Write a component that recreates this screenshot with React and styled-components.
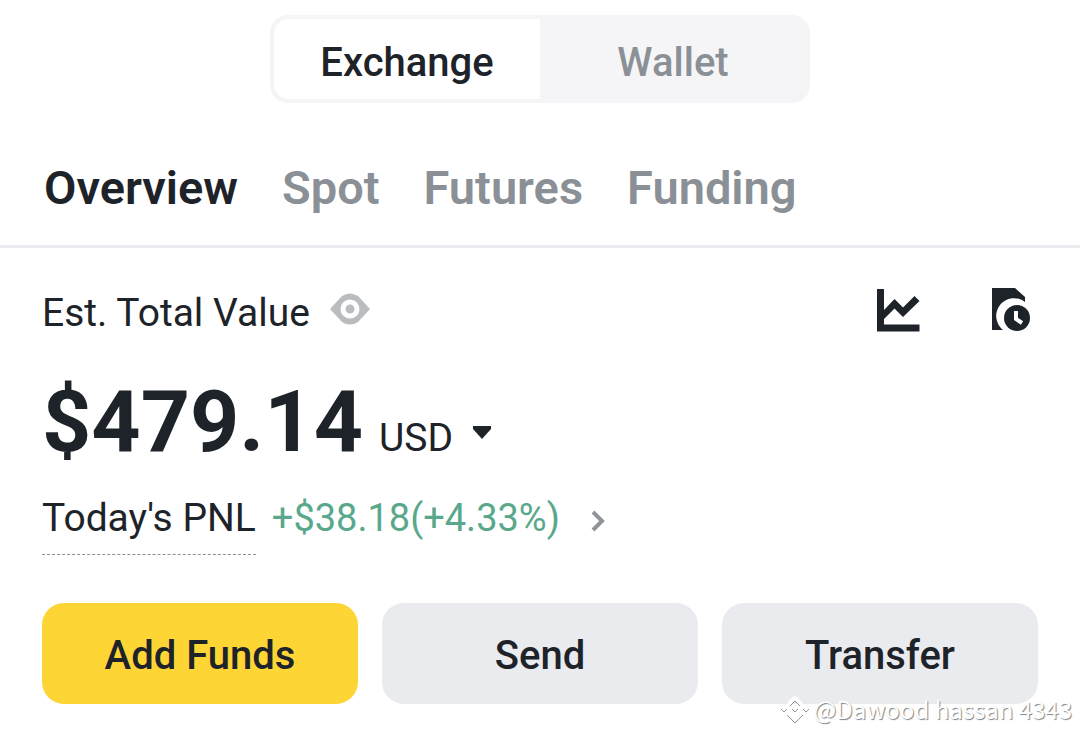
import React, { useState } from "react";
import styled, { createGlobalStyle } from "styled-components";

const ink = "#1e2329";
const muted = "#8a9096";
const surface = "#eaebef";

const GlobalStyle = createGlobalStyle`
  *, *::before, *::after { box-sizing: border-box; }
  body {
    margin: 0;
    background: #fff;
    color: ${ink};
    font-family: Roboto, "Noto Sans", sans-serif;
  }
  button { font: inherit; color: inherit; border: 0; background: none; padding: 0; cursor: pointer; }
  svg { display: block; flex: none; }
`;

const Page = styled.main`
  position: relative;
  padding-top: 15px;
`;

const Segmented = styled.div`
  display: flex;
  width: 50%;
  height: 88px;
  margin: 0 auto;
  padding: 4px;
  border-radius: 18px;
  background: #f5f5f7;
`;

const Segment = styled.button`
  && {
    flex: 1;
    padding-top: 8px;
    border-radius: 15px 0 0 15px;
    background: ${(p) => (p.$active ? "#fff" : "transparent")};
    color: ${(p) => (p.$active ? ink : muted)};
    font-size: 40px;
    line-height: 48px;
    font-weight: 500;
  }
`;

const Tabs = styled.nav`
  display: flex;
  gap: 44px;
  padding: 57px 44px 29px;
  border-bottom: 3px solid ${surface};
`;

const Tab = styled.a`
  color: ${(p) => (p.$active ? ink : muted)};
  font-size: 47px;
  line-height: 56px;
  font-weight: 600;
  text-decoration: none;
`;

const Content = styled.section`
  padding: 38px 42px 29px;
`;

const Row = styled.div`
  display: flex;
  align-items: flex-start;
`;

const ValueLabel = styled.h2`
  margin: 0 20px 0 0;
  font-size: 39px;
  line-height: 54px;
  font-weight: 400;
`;

const EyeButton = styled.button`
  && { padding-top: 7px; }
`;

const Actions = styled.div`
  display: flex;
  gap: 72px;
  margin-left: auto;
  padding: 2px 8px 0 0;
`;

const BalanceRow = styled.div`
  display: flex;
  align-items: baseline;
  gap: 16px;
  margin-top: 32px;
`;

const Balance = styled.strong`
  font-size: 86px;
  line-height: 100px;
  font-weight: 700;
`;

const Currency = styled.button`
  && {
    display: flex;
    align-items: center;
    gap: 20px;
    font-size: 39px;
    line-height: 48px;
    font-weight: 400;
  }
`;

const PnlRow = styled.div`
  display: flex;
  align-items: flex-start;
  gap: 16px;
  margin-top: 20px;
  font-size: 39px;
  line-height: 52px;
`;

const PnlLabel = styled.span`
  padding-bottom: 10px;
  border-bottom: 1px dashed #8a8f97;
`;

const Gain = styled.span`
  color: #5aa88b;
  font-size: 38px;
`;

const Details = styled.button`
  && {
    display: flex;
    align-items: center;
    height: 58px;
    margin-left: 15px;
  }
`;

const ButtonRow = styled.div`
  display: grid;
  grid-template-columns: repeat(3, 1fr);
  gap: 24px;
  margin-top: 48px;
`;

const ActionButton = styled.button`
  && {
    height: 101px;
    padding-top: 4px;
    border-radius: 22px;
    background: ${(p) => (p.$primary ? "#fdd535" : surface)};
    font-size: 40px;
    line-height: 48px;
    font-weight: 500;
  }
`;

const Credit = styled.div`
  position: absolute;
  right: 8px;
  bottom: 6px;
  display: flex;
  align-items: center;
  gap: 4px;
  color: #fff;
  font-family: "Noto Sans CJK SC", "Noto Sans", sans-serif;
  font-size: 24px;
  line-height: 36px;
  text-shadow: 1px 1px 1px #7c838a;
`;

const EyeIcon = () => (
  <svg width="40" height="32" viewBox="0 0 40 32" aria-hidden="true">
    <path d="M0 16 12 3Q20-2 28 3L40 16 28 29Q20 34 12 29Z" fill="#b9bdc0" />
    <circle cx="20" cy="16" r="7" fill="none" stroke="#fff" strokeWidth="5" />
  </svg>
);

const ChartIcon = () => (
  <svg width="43" height="43" viewBox="0 0 43 43" aria-hidden="true">
    <path d="M0 0H7V21L17.500 10 26 18.500 37.500 7 42.500 12 26 28 17.500 19.500 7 30V35.500H42.500V42.500H0Z" fill={ink} />
  </svg>
);

const HistoryIcon = () => (
  <svg width="38" height="44" viewBox="0 0 38 44" aria-hidden="true">
    <path d="M0 0H23L33 9V14A17 17 0 0 0 11 42H0Z" fill={ink} />
    <circle cx="25" cy="30" r="13" fill={ink} />
    <path d="M24 23V31L30 35" fill="none" stroke="#fff" strokeWidth="4" />
  </svg>
);

const CaretIcon = () => (
  <svg width="18" height="24" viewBox="0 0 18 24" aria-hidden="true">
    <path d="M0 0H18V3L9 13 0 3Z" fill={ink} />
  </svg>
);

const ChevronIcon = () => (
  <svg width="14" height="22" viewBox="0 0 14 22" aria-hidden="true">
    <path d="M2 2 11 11 2 20" fill="none" stroke="#8f949b" strokeWidth="4" />
  </svg>
);

const CreditLogo = () => (
  <svg width="28" height="30" viewBox="0 0 28 30" aria-hidden="true">
    <g fill="#fff">
      <path d="M6 9 14 1 22 9 19 12 14 7 9 12Z" />
      <path d="M0 15 3 12 6 15 3 18ZM11 15 14 12 17 15 14 18ZM22 15 25 12 28 15 25 18Z" />
      <path d="M6 21 9 18 14 23 19 18 22 21 14 29Z" />
    </g>
    <path d="M9 12 14 7 19 12M0 15 3 18 6 15M11 15 14 18 17 15M22 15 25 18 28 15M6 21 14 29 22 21" fill="none" stroke="#90969b" />
  </svg>
);

const tabs = ["Overview", "Spot", "Futures", "Funding"];

export default function App() {
  const [account, setAccount] = useState("Exchange");
  const [tab, setTab] = useState("Overview");
  return (
    <>
      <GlobalStyle />
      <Page>
        <Segmented>
          {["Exchange", "Wallet"].map((name) => (
            <Segment key={name} $active={name === account} aria-pressed={name === account} onClick={() => setAccount(name)}>
              {name}
            </Segment>
          ))}
        </Segmented>
        <Tabs>
          {tabs.map((name) => (
            <Tab key={name} href={`#${name.toLowerCase()}`} $active={name === tab} onClick={() => setTab(name)}>
              {name}
            </Tab>
          ))}
        </Tabs>
        <Content>
          <Row>
            <ValueLabel>Est. Total Value</ValueLabel>
            <EyeButton aria-label="Hide balance"><EyeIcon /></EyeButton>
            <Actions>
              <button aria-label="Analysis"><ChartIcon /></button>
              <button aria-label="History"><HistoryIcon /></button>
            </Actions>
          </Row>
          <BalanceRow>
            <Balance>$479.14</Balance>
            <Currency>USD<CaretIcon /></Currency>
          </BalanceRow>
          <PnlRow>
            <PnlLabel>Today's PNL</PnlLabel>
            <Gain>+$38.18(+4.33%)</Gain>
            <Details aria-label="PNL details"><ChevronIcon /></Details>
          </PnlRow>
          <ButtonRow>
            <ActionButton $primary>Add Funds</ActionButton>
            <ActionButton>Send</ActionButton>
            <ActionButton>Transfer</ActionButton>
          </ButtonRow>
        </Content>
        <Credit><CreditLogo />@Dawood hassan 4343</Credit>
      </Page>
    </>
  );
}
